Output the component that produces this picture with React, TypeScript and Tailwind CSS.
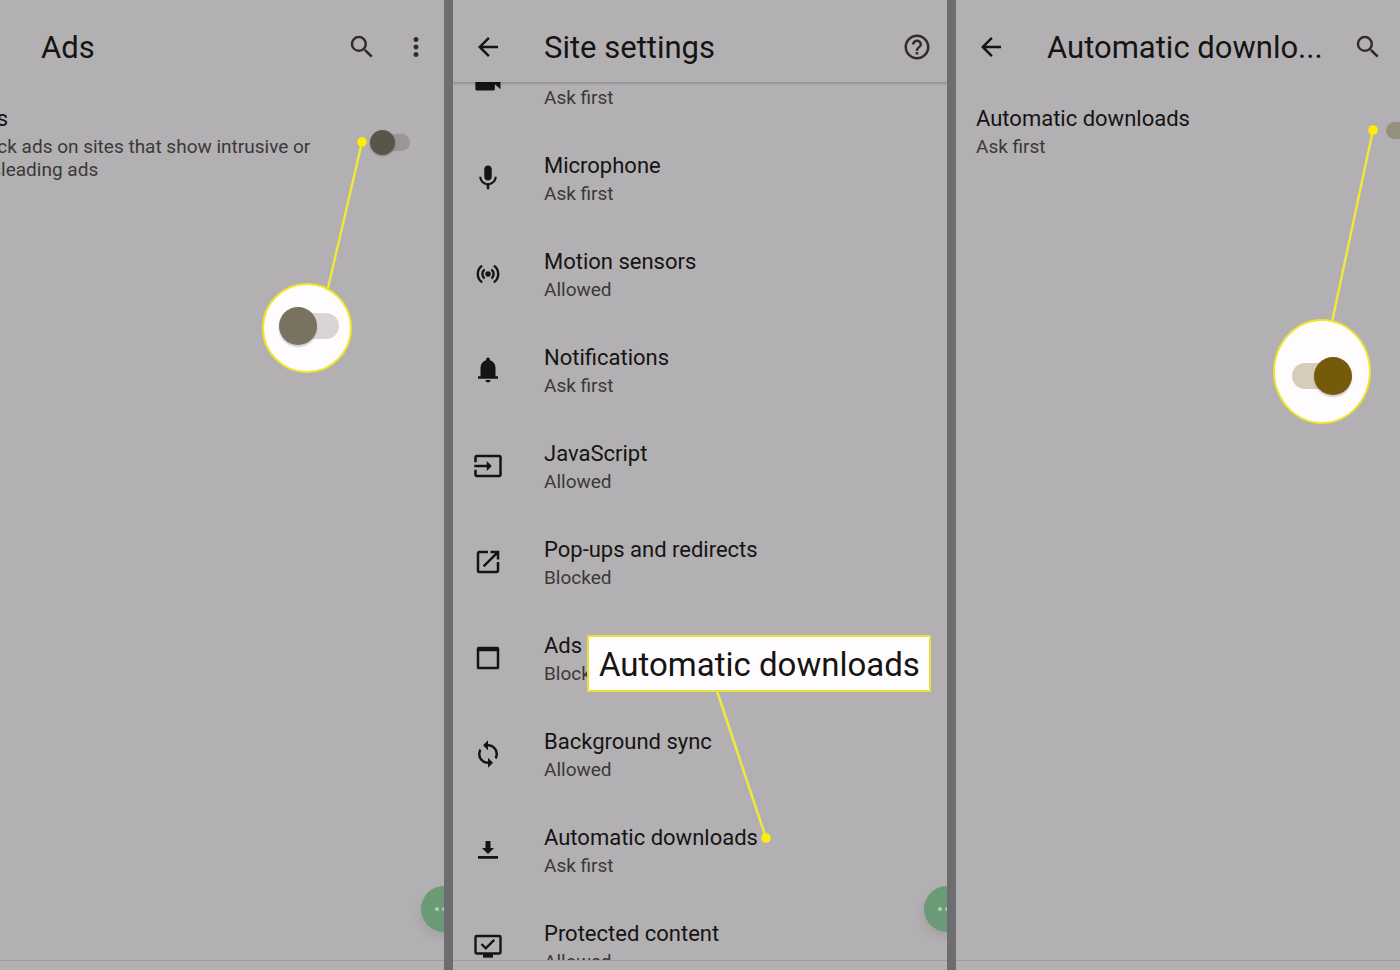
import type { ReactNode } from "react";
import {
  MdArrowBack,
  MdHelpOutline,
  MdInput,
  MdMic,
  MdMoreVert,
  MdOpenInNew,
  MdSearch,
  MdSync,
} from "react-icons/md";

const glyph = "size-[30px] shrink-0";

function CameraIcon() {
  return (
    <svg viewBox="0 0 24 24" className={glyph} fill="currentColor" aria-hidden="true">
      <path d="M3 6h12.500a1 1 0 0 1 1 1v4l5.500-4.500v11.200l-4.500-4v3.900a1.200 1.200 0 0 1-1.200 1.200H3.100a1.200 1.200 0 0 1-1.200-1.200V7a1 1 0 0 1 1-1z" />
    </svg>
  );
}

function SensorsIcon() {
  return (
    <svg viewBox="0 0 24 24" className={glyph} fill="none" stroke="currentColor" strokeWidth="1.9" aria-hidden="true">
      <circle cx="12" cy="12" r="2.200" fill="currentColor" stroke="none" />
      <path d="M7.300 5.300a8.200 8.200 0 0 0 0 13.400M16.700 5.300a8.200 8.200 0 0 1 0 13.400M9.300 8.400a4.500 4.500 0 0 0 0 7.200M14.700 8.400a4.500 4.500 0 0 1 0 7.200" />
    </svg>
  );
}

function BellIcon() {
  return (
    <svg viewBox="0 0 24 24" className={glyph} fill="currentColor" aria-hidden="true">
      <path d="M4 19v-2h2v-7q0-2.075 1.250-3.688Q8.500 4.700 10.500 4.200v-.7q0-.625.438-1.062Q11.375 2 12 2t1.063.438Q13.500 2.875 13.500 3.500v.7q2 .5 3.250 2.112Q18 7.925 18 10v7h2v2zm8 3q-.825 0-1.412-.587Q10 20.825 10 20h4q0 .825-.587 1.413Q12.825 22 12 22z" />
    </svg>
  );
}

function AdsIcon() {
  return (
    <svg viewBox="0 0 24 24" className={glyph} fill="currentColor" fillRule="evenodd" aria-hidden="true">
      <path d="M4.500 3h15A1.500 1.500 0 0 1 21 4.500v15a1.500 1.500 0 0 1-1.500 1.500h-15A1.500 1.500 0 0 1 3 19.500v-15A1.500 1.500 0 0 1 4.500 3zM5 6.600v12.400h14V6.600z" />
    </svg>
  );
}

function DownloadIcon() {
  return (
    <svg viewBox="0 0 24 24" className={glyph} fill="currentColor" aria-hidden="true">
      <path d="M10 4.800h4v5.600h2.800L12 15.200l-4.800-4.800H10zM4 16.800h16V19H4z" />
    </svg>
  );
}

function ProtectedIcon() {
  return (
    <svg viewBox="0 0 24 24" className={glyph} fill="none" stroke="currentColor" strokeWidth="1.900" aria-hidden="true">
      <rect x="2" y="4" width="20" height="14" rx="1" />
      <path d="M8 18h8v3.300H8z" fill="currentColor" stroke="none" />
      <path d="M6.800 10.400l3.400 3.400 6.800-6.700" />
    </svg>
  );
}

type Row = { title: string; status: string; icon: ReactNode };

const rows: Row[] = [
  { title: "Camera", status: "Ask first", icon: <CameraIcon /> },
  { title: "Microphone", status: "Ask first", icon: <MdMic className={glyph} /> },
  { title: "Motion sensors", status: "Allowed", icon: <SensorsIcon /> },
  { title: "Notifications", status: "Ask first", icon: <BellIcon /> },
  { title: "JavaScript", status: "Allowed", icon: <MdInput className={glyph} /> },
  { title: "Pop-ups and redirects", status: "Blocked", icon: <MdOpenInNew className={glyph} /> },
  { title: "Ads", status: "Blocked", icon: <AdsIcon /> },
  { title: "Background sync", status: "Allowed", icon: <MdSync className={glyph} /> },
  { title: "Automatic downloads", status: "Ask first", icon: <DownloadIcon /> },
  { title: "Protected content", status: "Allowed", icon: <ProtectedIcon /> },
];

function IconButton({ label, children }: { label: string; children: ReactNode }) {
  return (
    <button type="button" aria-label={label} className="flex shrink-0 items-center justify-center text-[#2f2c2b]">
      {children}
    </button>
  );
}

function Header({ title, divided, children }: { title: string; divided?: boolean; children: ReactNode }) {
  return (
    <header
      className={
        divided
          ? "z-10 flex h-[82px] shrink-0 items-center pt-3 pr-[15px] pl-5 shadow-[0_2px_2px_rgba(0,0,0,0.18)]"
          : "flex h-[82px] shrink-0 items-center pt-3 pr-[13px] pl-5"
      }
    >
      <button type="button" aria-label="Back" className="shrink-0 text-[#161412]">
        <MdArrowBack className="size-[30px]" />
      </button>
      <h1 className="ml-[41px] flex-1 pt-0.5 text-[31px] leading-10 whitespace-nowrap text-[#161412]">{title}</h1>
      {children}
    </header>
  );
}

function SwitchRow({
  id,
  title,
  detail,
  on,
}: {
  id: string;
  title: string;
  detail: ReactNode;
  on?: boolean;
}) {
  return (
    <div
      className={
        on
          ? "flex items-center justify-between pt-[21px] pr-[29px] pl-5"
          : "flex items-center justify-between pt-[21px] pr-[34px] pl-5"
      }
    >
      <label htmlFor={id} className="block">
        <span className="block text-[22px] leading-8 text-[#161412]">{title}</span>
        <span className="block text-[19px] leading-[23px] text-[#3b3838]">{detail}</span>
      </label>
      <input
        id={id}
        type="checkbox"
        role="switch"
        defaultChecked={on}
        className={
          on
            ? "relative h-[17px] w-[35px] shrink-0 appearance-none rounded-full bg-[#96917f] before:absolute before:-top-1 before:-right-1 before:size-[25px] before:rounded-full before:bg-[#523f06]"
            : "relative h-[17px] w-[35px] shrink-0 appearance-none rounded-full bg-[#999694] before:absolute before:-top-1 before:-left-[5px] before:size-[25px] before:rounded-full before:bg-[#5a544b] before:shadow-[0_1px_2px_rgba(0,0,0,0.3)]"
        }
      />
    </div>
  );
}

function ChatBubble() {
  return (
    <button
      type="button"
      aria-label="Chat"
      className="absolute -right-[23px] bottom-[38px] z-10 flex size-[46px] items-center gap-[3px] rounded-full bg-[#6a9a76] pl-[14px] shadow-[-2px_6px_8px_rgba(0,0,0,0.07)]"
    >
      <span className="size-1 rounded-full bg-[#b9c9bc]" />
      <span className="size-1 rounded-full bg-[#b9c9bc]" />
      <span className="size-1 rounded-full bg-[#b9c9bc]" />
    </button>
  );
}

function NavBar() {
  return <div className="h-[10px] shrink-0 border-t border-[#9d9b9e]" />;
}

function Pointer({ x1, y1, x2, y2 }: { x1: number; y1: number; x2: number; y2: number }) {
  return (
    <svg
      width="494"
      height="970"
      viewBox="0 0 494 970"
      className="pointer-events-none absolute top-0 left-0 z-20"
      aria-hidden="true"
    >
      <line x1={x1} y1={y1} x2={x2} y2={y2} stroke="#f3e935" strokeWidth="2.400" />
      <circle cx={x1} cy={y1} r="4.800" fill="#ffee00" />
    </svg>
  );
}

const screen = "relative flex min-w-[494px] shrink-0 grow flex-col";

export default function App() {
  return (
    <main className="grid h-screen grid-cols-[444fr_494fr_444fr] gap-[9px] overflow-hidden bg-[#6d6c6e] font-['Roboto',sans-serif]">
      <section className="relative flex min-w-0 justify-end overflow-hidden bg-[#b2b0b3]">
        <div className={screen}>
          <Header title="Ads">
            <IconButton label="Search">
              <MdSearch className="size-[30px]" />
            </IconButton>
            <span className="w-6" />
            <IconButton label="More options">
              <MdMoreVert className="size-[30px]" />
            </IconButton>
          </Header>
          <div className="flex-1">
            <SwitchRow
              id="ads"
              title="Ads"
              detail={
                <>
                  Block ads on sites that show intrusive or
                  <br />
                  misleading ads
                </>
              }
            />
          </div>
          <NavBar />
          <Pointer x1={412} y1={142} x2={378} y2={288} />
          <div className="absolute top-[283px] left-[312px] z-20 flex size-[90px] items-center justify-center rounded-full border-2 border-[#efe52b] bg-[#fffcfe] pb-1 pl-1">
            <div className="flex h-[26px] w-[60px] items-center rounded-full bg-[#d9d5d4]">
              <div className="size-[38px] shrink-0 rounded-full bg-[#7a7261] shadow-[0_2px_2px_rgba(0,0,0,0.2)]" />
            </div>
          </div>
        </div>
        <ChatBubble />
      </section>

      <section className="relative flex min-w-0 overflow-hidden bg-[#b2b0b3]">
        <div className="relative flex min-w-0 flex-1 flex-col">
          <Header title="Site settings" divided>
            <IconButton label="Help">
              <MdHelpOutline className="size-[30px]" />
            </IconButton>
          </Header>
          <div className="min-h-0 flex-1 overflow-hidden">
            <ul className="-mt-12">
              {rows.map((row) => (
                <li key={row.title}>
                  <button type="button" className="flex h-24 w-full items-center gap-[41px] pl-5 text-left text-[#161412]">
                    {row.icon}
                    <span>
                      <span className="block text-[22px] leading-8">{row.title}</span>
                      <span className="block text-[19px] leading-6 text-[#3b3838]">{row.status}</span>
                    </span>
                  </button>
                </li>
              ))}
            </ul>
          </div>
          <NavBar />
          <Pointer x1={313} y1={838} x2={264} y2={691} />
          <div className="absolute top-[635px] left-[134px] z-20 border-2 border-[#ebdf3a] bg-[#fffcfe] pt-2 pr-[9px] pb-[5px] pl-[10px] text-[33px] leading-10 whitespace-nowrap text-[#161412]">
            Automatic downloads
          </div>
        </div>
        <ChatBubble />
      </section>

      <section className="relative flex min-w-0 overflow-hidden bg-[#b2b0b3]">
        <div className={screen}>
          <Header title="Automatic downlo...">
            <IconButton label="Search">
              <MdSearch className="size-[30px]" />
            </IconButton>
            <span className="w-6" />
            <IconButton label="More options">
              <MdMoreVert className="size-[30px]" />
            </IconButton>
          </Header>
          <div className="flex-1">
            <SwitchRow id="downloads" title="Automatic downloads" detail="Ask first" on />
          </div>
          <NavBar />
          <Pointer x1={417} y1={130} x2={376} y2={322} />
          <div className="absolute top-[319px] left-[317px] z-20 flex h-[105px] w-[98px] items-center justify-center rounded-[50%] border-2 border-[#efe52b] bg-[#fffcfe] pt-2">
            <div className="flex h-[26px] w-[60px] items-center justify-end rounded-full bg-[#d5cdb9]">
              <div className="size-[38px] shrink-0 rounded-full bg-[#745a09] shadow-[0_2px_2px_rgba(0,0,0,0.2)]" />
            </div>
          </div>
        </div>
      </section>
    </main>
  );
}
